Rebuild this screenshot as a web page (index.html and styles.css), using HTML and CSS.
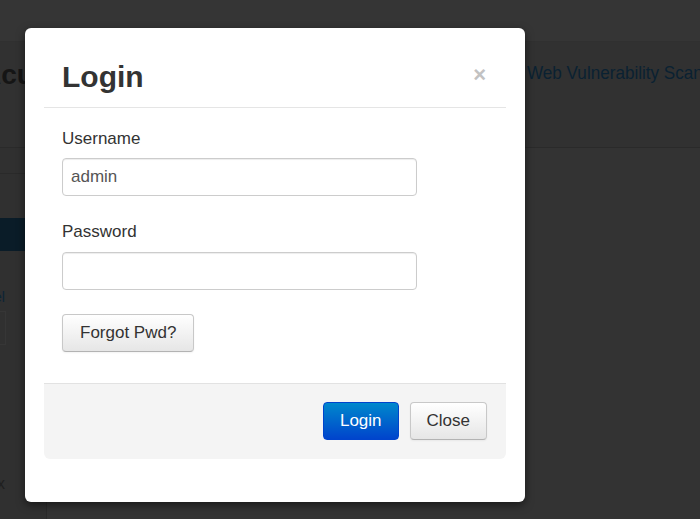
FILE: index.html
```html
<!DOCTYPE html>
<html>
<head>
<meta charset="utf-8">
<link rel="stylesheet" href="styles.css">
</head>
<body>
<div class="page">
  <div class="topbar"></div>
  <header class="header">
    <div class="logo">Acunetix</div>
    <div class="apptitle">Web Vulnerability Scanner</div>
  </header>
  <div class="main">
    <aside class="sidebar">
      <div class="side-top"></div>
      <div class="side-active"></div>
      <div class="side-link">Panel</div>
      <div class="side-box"></div>
      <div class="side-spacer"></div>
      <div class="side-x">x</div>
    </aside>
    <section class="content"></section>
  </div>
</div>

<div class="modal">
  <div class="modal-header">
    <h3 class="modal-title">Login</h3>
    <span class="modal-close">×</span>
  </div>
  <div class="modal-body">
    <label class="field-label">Username</label>
    <input class="field-input" type="text" value="admin">
    <label class="field-label second">Password</label>
    <input class="field-input" type="password">
    <button class="btn btn-default forgot">Forgot Pwd?</button>
  </div>
  <div class="modal-footer">
    <button class="btn btn-primary">Login</button>
    <button class="btn btn-default">Close</button>
  </div>
</div>
</body>
</html>
```

FILE: styles.css
```css
* { box-sizing: border-box; }
html, body { margin: 0; padding: 0; }
body {
  width: 700px;
  height: 519px;
  overflow: hidden;
  background: #333333;
  font-family: "Liberation Sans", Arial, sans-serif;
  position: relative;
}

/* background page (dimmed by the backdrop) */
.page { display: flex; flex-direction: column; height: 519px; }
.topbar { height: 42px; flex-shrink: 0; background: #353535; border-bottom: 1px solid #303030; }
.header {
  height: 106px;
  flex-shrink: 0;
  background: #313131;
  border-bottom: 1px solid #2a2a2a;
  display: flex;
  align-items: flex-start;
  overflow: hidden;
}
.logo {
  flex: 0 0 200px;
  margin-left: -19px;
  margin-top: 17px;
  font-size: 28px;
  font-weight: bold;
  color: #151515;
  white-space: nowrap;
}
.apptitle {
  flex: 0 0 auto;
  margin-left: 346px;
  margin-top: 20px;
  font-size: 19px;
  color: #0a2132;
  white-space: nowrap;
  transform: scaleX(0.9);
  transform-origin: left center;
}
.main { flex: 1; display: flex; }
.sidebar {
  width: 47px;
  flex-shrink: 0;
  background: #303030;
  border-right: 1px solid #2a2a2a;
  display: flex;
  flex-direction: column;
  overflow: hidden;
}
.side-top { height: 26px; border-bottom: 1px solid #2a2a2a; }
.side-active { margin-top: 44px; height: 33px; background: #0a1c28; }
.side-link {
  margin-top: 38px;
  margin-left: -31px;
  font-size: 14px;
  color: #0c2436;
  white-space: nowrap;
}
.side-box { margin-top: 6px; width: 6px; height: 34px; border: 1px solid #363636; border-left: none; }
.side-spacer { flex: 1; }
.side-x { margin-left: -3px; margin-bottom: 26px; font-size: 16px; color: #1f1f1f; }
.content { flex: 1; }

/* modal */
.modal {
  position: absolute;
  left: 25px;
  top: 28px;
  width: 500px;
  height: 474px;
  background: #ffffff;
  border-radius: 6px;
  padding: 19px 19px 44px;
  box-shadow: 0 3px 9px rgba(0, 0, 0, 0.5);
  display: flex;
  flex-direction: column;
}
.modal-header {
  display: flex;
  justify-content: space-between;
  align-items: flex-start;
  padding: 13px 20px 14px 18px;
  border-bottom: 1px solid #e5e5e5;
}
.modal-title {
  margin: 0;
  font-size: 30px;
  line-height: 33px;
  font-weight: bold;
  color: #333333;
}
.modal-close {
  font-size: 22px;
  line-height: 22px;
  font-weight: bold;
  color: #c2c2c2;
  margin-top: 4px;
}
.modal-body {
  display: flex;
  flex-direction: column;
  align-items: flex-start;
  padding: 19px 18px 31px;
}
.field-label {
  font-size: 17px;
  line-height: 20px;
  color: #333333;
  margin-top: 2px;
  margin-bottom: 9px;
}
.field-label.second { margin-top: 26px; margin-bottom: 10px; }
.field-input {
  width: 355px;
  height: 38px;
  margin: 0;
  padding: 0 8px;
  border: 1px solid #cccccc;
  border-radius: 4px;
  font-family: "Liberation Sans", Arial, sans-serif;
  font-size: 17px;
  color: #555555;
  background: #ffffff;
  box-shadow: inset 0 1px 1px rgba(0, 0, 0, 0.075);
  outline: none;
}
.btn {
  height: 38px;
  padding: 0 16px;
  border-radius: 4px;
  font-family: "Liberation Sans", Arial, sans-serif;
  font-size: 17px;
  line-height: 20px;
  cursor: pointer;
  margin: 0;
}
.btn-default {
  color: #333333;
  border: 1px solid #c8c8c8;
  border-bottom-color: #b3b3b3;
  background: linear-gradient(to bottom, #ffffff, #e6e6e6);
  box-shadow: inset 0 1px 0 rgba(255, 255, 255, 0.2), 0 1px 2px rgba(0, 0, 0, 0.05);
}
.forgot { margin-top: 24px; padding: 0 17px; }
.btn-primary {
  color: #ffffff;
  border: 1px solid #0044cc;
  background: linear-gradient(to bottom, #0088cc, #0044cc);
}
.modal-footer {
  display: flex;
  justify-content: flex-end;
  gap: 11px;
  padding: 18px 19px 19px;
  background: #f4f4f4;
  border-top: 1px solid #e2e2e2;
  border-radius: 0 0 6px 6px;
}
```
